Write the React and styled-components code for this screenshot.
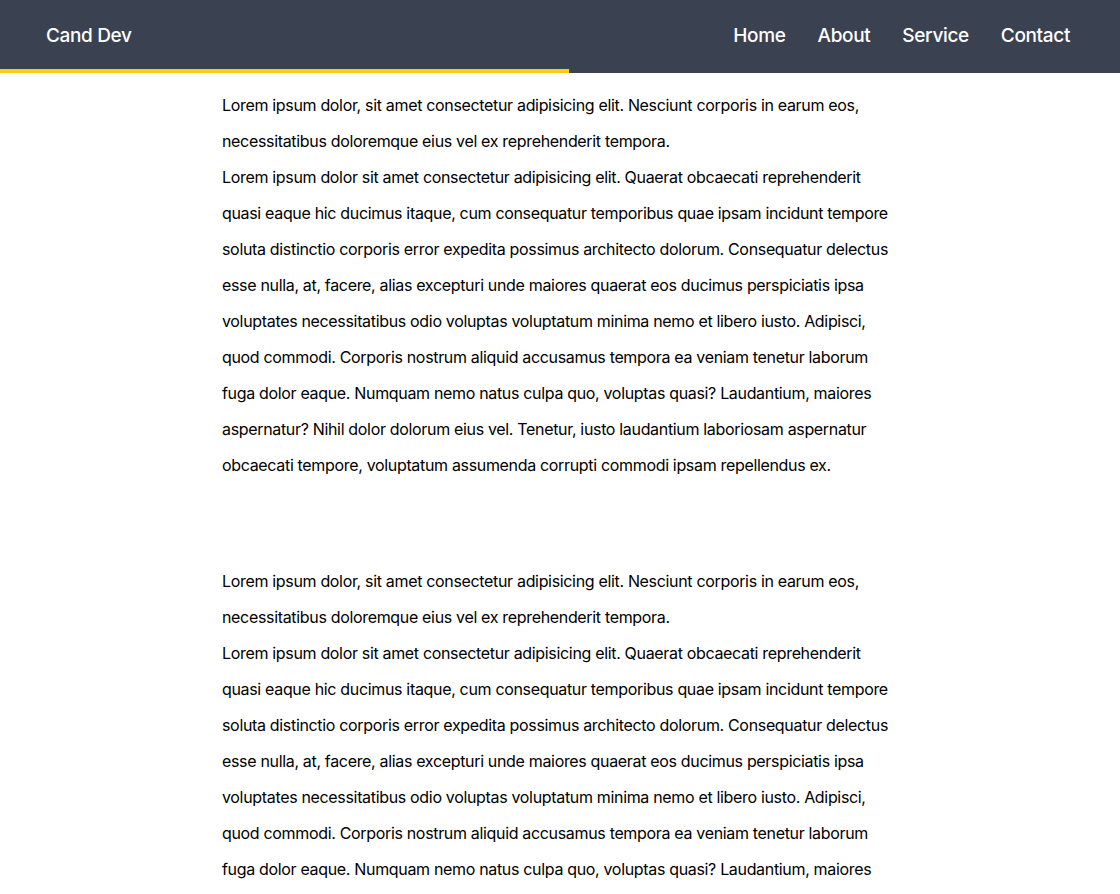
import React from "react";
import styled, { createGlobalStyle } from "styled-components";

const GlobalStyle = createGlobalStyle`
  html, body { margin: 0; padding: 0; background: #ffffff; }
  body {
    font-family: Inter, "Noto Sans", "Liberation Sans", sans-serif;
    color: #000000;
  }
  * { box-sizing: border-box; }
`;

const Header = styled.header`
  background: #3a4252;
  display: flex;
  flex-direction: column;
`;

const NavBar = styled.nav`
  height: 69px;
  display: flex;
  align-items: center;
  justify-content: space-between;
  padding: 2px 50px 0 46px;
`;

const Brand = styled.a`
  color: #ffffff;
  font-size: 19px;
  font-weight: 500;
  text-decoration: none;
  letter-spacing: -0.35px;
`;

const Links = styled.ul`
  list-style: none;
  margin: 0;
  padding: 0;
  display: flex;
  gap: 32px;
`;

const LinkItem = styled.li`
  color: #ffffff;
  font-size: 19px;
  font-weight: 500;
  letter-spacing: -0.35px;
`;

const Track = styled.div`
  height: 4px;
  display: flex;
`;

const Progress = styled.div`
  height: 100%;
  background: #facc15;
`;

const Main = styled.main`
  display: flex;
  flex-direction: column;
  align-items: center;
  gap: 80px;
  padding-top: 14px;
`;

const Section = styled.section`
  width: 676px;
  font-size: 16px;
  line-height: 36px;
  letter-spacing: -0.33px;
`;

const Para = styled.p`
  margin: 0;
`;

const p1 =
  "Lorem ipsum dolor, sit amet consectetur adipisicing elit. Nesciunt corporis in earum eos, necessitatibus doloremque eius vel ex reprehenderit tempora.";
const p2 =
  "Lorem ipsum dolor sit amet consectetur adipisicing elit. Quaerat obcaecati reprehenderit quasi eaque hic ducimus itaque, cum consequatur temporibus quae ipsam incidunt tempore soluta distinctio corporis error expedita possimus architecto dolorum. Consequatur delectus esse nulla, at, facere, alias excepturi unde maiores quaerat eos ducimus perspiciatis ipsa voluptates necessitatibus odio voluptas voluptatum minima nemo et libero iusto. Adipisci, quod commodi. Corporis nostrum aliquid accusamus tempora ea veniam tenetur laborum fuga dolor eaque. Numquam nemo natus culpa quo, voluptas quasi? Laudantium, maiores aspernatur? Nihil dolor dolorum eius vel. Tenetur, iusto laudantium laboriosam aspernatur obcaecati tempore, voluptatum assumenda corrupti commodi ipsam repellendus ex.";

const links = ["Home", "About", "Service", "Contact"];
const progress = (569 / 1120) * 100;

export default function App() {
  return (
    <>
      <GlobalStyle />
      <Header>
        <NavBar>
          <Brand href="#">Cand Dev</Brand>
          <Links>
            {links.map((l) => (
              <LinkItem key={l}>{l}</LinkItem>
            ))}
          </Links>
        </NavBar>
        <Track>
          <Progress style={{ width: `${progress}%` }} />
        </Track>
      </Header>
      <Main>
        {[0, 1, 2].map((i) => (
          <Section key={i}>
            <Para>{p1}</Para>
            <Para>{p2}</Para>
          </Section>
        ))}
      </Main>
    </>
  );
}
